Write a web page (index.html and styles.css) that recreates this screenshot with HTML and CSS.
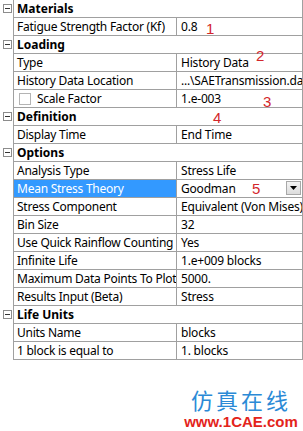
FILE: index.html
```html
<!doctype html>
<html>
<head>
<meta charset="UTF-8">
<title>Details of Fatigue Tool</title>
<link rel="stylesheet" href="styles.css">
</head>
<body>
<div class="details">
  <div class="row cat"><div class="gutter"><span class="expander"></span></div><div class="cells"><div class="name">Materials</div></div></div>
  <div class="row"><div class="gutter"></div><div class="cells"><div class="name">Fatigue Strength Factor (Kf)</div><div class="value">0.8</div></div></div>

  <div class="row cat"><div class="gutter"><span class="expander"></span></div><div class="cells"><div class="name">Loading</div></div></div>
  <div class="row"><div class="gutter"></div><div class="cells"><div class="name">Type</div><div class="value">History Data</div></div></div>
  <div class="row"><div class="gutter"></div><div class="cells"><div class="name">History Data Location</div><div class="value">...\SAETransmission.dat</div></div></div>
  <div class="row"><div class="gutter"></div><div class="cells"><div class="name"><span class="check"></span>Scale Factor</div><div class="value">1.e-003</div></div></div>

  <div class="row cat"><div class="gutter"><span class="expander"></span></div><div class="cells"><div class="name">Definition</div></div></div>
  <div class="row"><div class="gutter"></div><div class="cells"><div class="name">Display Time</div><div class="value">End Time</div></div></div>

  <div class="row cat"><div class="gutter"><span class="expander"></span></div><div class="cells"><div class="name">Options</div></div></div>
  <div class="row"><div class="gutter"></div><div class="cells"><div class="name">Analysis Type</div><div class="value">Stress Life</div></div></div>
  <div class="row"><div class="gutter"></div><div class="cells"><div class="name selected">Mean Stress Theory</div><div class="value">Goodman<span class="drop"><svg width="7" height="4" viewBox="0 0 7 4"><path d="M0 0h7L3.5 4z" fill="#000"/></svg></span></div></div></div>
  <div class="row"><div class="gutter"></div><div class="cells"><div class="name">Stress Component</div><div class="value">Equivalent (Von Mises)</div></div></div>
  <div class="row"><div class="gutter"></div><div class="cells"><div class="name">Bin Size</div><div class="value">32</div></div></div>
  <div class="row"><div class="gutter"></div><div class="cells"><div class="name">Use Quick Rainflow Counting</div><div class="value">Yes</div></div></div>
  <div class="row"><div class="gutter"></div><div class="cells"><div class="name">Infinite Life</div><div class="value">1.e+009 blocks</div></div></div>
  <div class="row"><div class="gutter"></div><div class="cells"><div class="name">Maximum Data Points To Plot</div><div class="value">5000.</div></div></div>
  <div class="row"><div class="gutter"></div><div class="cells"><div class="name">Results Input (Beta)</div><div class="value">Stress</div></div></div>

  <div class="row cat"><div class="gutter"><span class="expander"></span></div><div class="cells"><div class="name">Life Units</div></div></div>
  <div class="row"><div class="gutter"></div><div class="cells"><div class="name">Units Name</div><div class="value">blocks</div></div></div>
  <div class="row"><div class="gutter"></div><div class="cells"><div class="name">1 block is equal to</div><div class="value">1. blocks</div></div></div>

  <!-- red callout numbers drawn over the grid -->
  <span class="mark m1">1</span>
  <span class="mark m2">2</span>
  <span class="mark m3">3</span>
  <span class="mark m4">4</span>
  <span class="mark m5">5</span>
</div>

<div class="brand">
  <div class="brand_cn">仿真在线</div>
  <div class="brand_url">www.1CAE.com</div>
</div>
</body>
</html>
```
FILE: styles.css
```css
body {
    margin: 0;
    background: #fff;
    font-family: "Noto Sans", "Open Sans", sans-serif;
    font-size: 12px;
    color: #000;
}
.details {
    width: 303px;
    position: relative;
}
.row {
    display: flex;
    height: 18px;
}
.gutter {
    width: 13px;
    flex: none;
    position: relative;
}
.expander {
    position: absolute;
    left: 3px;
    top: 4px;
    width: 7px;
    height: 7px;
    border: 1px solid #8c8c8c;
    background: #fff;
}
.expander::after {
    content: "";
    position: absolute;
    left: 1px;
    top: 3px;
    width: 5px;
    height: 1px;
    background: #333;
}
.cells {
    display: flex;
    width: 288px;
    border-left: 1px solid #a0a0a0;
    border-right: 1px solid #a0a0a0;
    border-bottom: 1px solid #a0a0a0;
}
.name {
    width: 159px;
    flex: none;
    padding-left: 3px;
    line-height: 17px;
    letter-spacing: -0.25px;
    white-space: nowrap;
    overflow: hidden;
    border-right: 1px solid #a0a0a0;
}
.cat .name {
    width: auto;
    flex: 1;
    font-weight: bold;
    letter-spacing: 0;
    border-right: none;
}
.value {
    flex: 1;
    padding-left: 4px;
    line-height: 17px;
    letter-spacing: -0.2px;
    white-space: nowrap;
    overflow: hidden;
    position: relative;
}
.selected {
    background: #3399ff;
    color: #fff;
}
.check {
    display: inline-block;
    width: 10px;
    height: 10px;
    border: 1px solid #b4b4b4;
    vertical-align: -2px;
    margin: 0 6px 0 2px;
}
.drop {
    position: absolute;
    right: 1px;
    top: 1px;
    width: 15px;
    height: 14px;
    background: linear-gradient(#f4f4f4, #dcdcdc);
    border: 1px solid #a8a8a8;
    box-sizing: border-box;
    display: flex;
    align-items: center;
    justify-content: center;
}
.mark {
    position: absolute;
    color: #d3262b;
    font-family: "Liberation Sans", sans-serif;
    font-size: 15px;
    line-height: 15px;
}
.m1 { left: 206px; top: 21px; }
.m2 { left: 256px; top: 48px; }
.m3 { left: 263px; top: 94px; }
.m4 { left: 213px; top: 110px; }
.m5 { left: 252px; top: 181px; }
.brand {
    width: 118px;
    margin: 25px 0 0 182px;
    text-align: center;
}
.brand_cn {
    color: #2b8ad6;
    font-family: "Noto Sans CJK SC", sans-serif;
    font-size: 22px;
    line-height: 29px;
    letter-spacing: 3px;
}
.brand_url {
    color: #e3241b;
    font-family: "Liberation Sans", sans-serif;
    font-weight: bold;
    font-size: 15px;
    line-height: 16px;
}
```
